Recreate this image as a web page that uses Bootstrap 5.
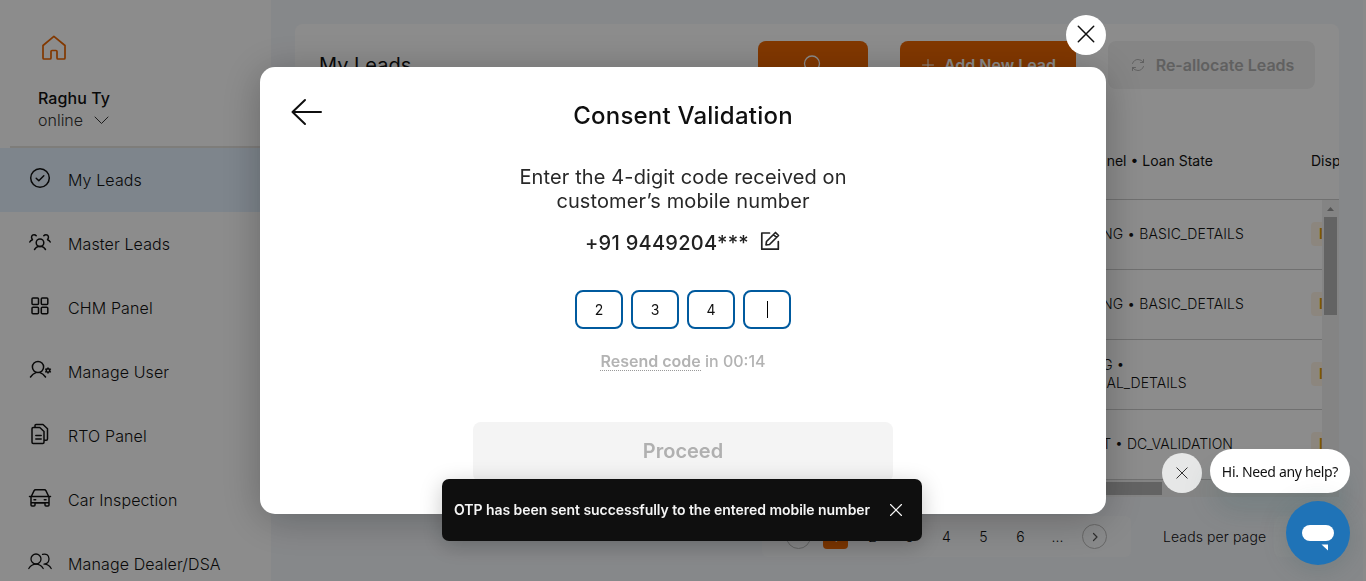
<!DOCTYPE html>
<html lang="en">
<head>
<meta charset="utf-8">
<meta name="viewport" content="width=device-width, initial-scale=1">
<title>My Leads</title>
<link href="https://cdn.jsdelivr.net/npm/bootstrap@5.3.0/dist/css/bootstrap.min.css" rel="stylesheet">
<style>
body{font-family:Inter,"Liberation Sans",sans-serif;background:#f5f8fc;color:#111;height:581px;overflow:hidden;font-size:14px}
svg{display:block;fill:none;stroke:currentColor;stroke-linecap:round;stroke-linejoin:round}
.app-shell{height:581px}
.side{width:271px;background:#fff}
.side-head{height:146px;padding:35px 0 0 38px}
.user-name{font-size:16px;font-weight:500;line-height:22px;margin-top:26px;letter-spacing:.08px}
.user-state{font-size:16px;font-weight:300;line-height:22px;color:#333}
.side-line{height:2px;margin-left:10px;background:#e6e3df}
.side-link{height:64px;padding-left:28px;font-size:16px;font-weight:300;letter-spacing:.12px;color:#111;text-decoration:none}
.side-link svg{margin:0 16px 5px 0}
.side-link.active{background:#e5f2ff}
.main-area{padding:24px 27px 0 24px;min-width:0}
.leads-panel{height:473px;background:#fff;border-radius:8px 8px 0 0;overflow:hidden}
.panel-head{height:99px;padding:17px 24px 0 25px}
.panel-title{font-size:20px;font-weight:400;line-height:48px;margin-left:-1px}
.head-btn{height:48px;border-radius:8px;border:0;font-size:16px;font-weight:600;color:#fff;background:#ed6600}
.head-btn.muted{background:#f3f3f3;color:#b0b0b0}
.head-btn svg{position:static}
.grid-head{height:77px;padding-bottom:1px;border-bottom:1px solid #ccc;font-size:14px;font-weight:400}
.col-gap{width:777px}
.col-state{width:218px}
.col-gap.wide{width:765px}
.col-gap.wide + .col-state{width:230px;letter-spacing:.1px}
.col-gap.mid{width:789px}
.col-gap.mid + .col-state{width:206px}
.col-gap.end{width:779px}
.col-gap.end + .col-state{width:216px}
.grid-scroll{width:17px;background:#f1f1f1}
.grid-thumb{width:13px;height:98px;background:#b5b5b5}
.grid-row{height:70px;padding-bottom:1px;border-bottom:1px solid #ccc;font-size:14px;font-weight:300;line-height:18px}
.state-chip{height:24px;width:40px;margin-left:21px;border-radius:4px;background:#fff5e6;color:#d99a00;font-weight:600;padding-left:8px;line-height:24px}
.h-scroll{height:17px;padding-top:2px;background:#f1f1f1}
.h-scroll div{height:13px;width:867px;background:#b5b5b5}
.pager{width:369px;height:41px;border-radius:6px;background:#fafbfd;padding:0 24px;font-weight:300}
.pg{width:25px;height:25px;border-radius:4px;line-height:25px;text-align:center}
.pg.on{background:#ed6600;color:#fff}
.pg.ring{border:1px solid #bbb;border-radius:50%;color:#555}
.per-page{margin-left:32px;width:111px;font-weight:300;letter-spacing:.1px}
.per-select{width:65px;height:41px;background:#fafbfd;border-radius:6px}
.page-scroll{right:0;top:0;width:3px;height:581px;background:#fbfbfb}
.veil{inset:0;background:rgba(0,0,0,.45);z-index:10}
.consent{width:846px;height:447px;margin:67px 0 0 260px;background:#fff;border-radius:15px;box-shadow:0 5px 40px rgba(0,0,0,.27);color:#0f0f0f}
.consent h1{font-size:24px;font-weight:500;line-height:32px;padding-top:33px;letter-spacing:.22px}
.back-arrow{left:31px;top:31px}
.close-x{right:0;top:-52px;width:40px;height:40px;border-radius:50%;background:#fff}
.ask{font-size:20px;line-height:24px;color:#282828;margin-top:33px;letter-spacing:.12px}
.phone{font-size:20px;font-weight:500;line-height:28px;color:#222;margin-top:16px;letter-spacing:.28px}
.code-box{width:48px;height:39px;border:2px solid #005a9e;border-radius:8px;font-size:14px}
.caret{width:1px;height:17px;background:#000}
.resend{font-size:16px;font-weight:500;line-height:20px;margin-top:22px;color:#b3b3b3}
.resend span{display:inline-block;line-height:18px;font-weight:600;border-bottom:1px dotted #999}
.proceed{width:420px;height:60px;margin-top:51px;padding-bottom:3px;background:#f4f4f4;border-radius:8px;border:0;color:#b0b0b0;font-size:20px;font-weight:600}
.snack{left:442px;top:479px;width:480px;height:62px;padding:0 20px 0 12px;background:#0f0f0f;border-radius:7px;color:#f5f5f5;font-size:14px;font-weight:600;z-index:20;box-shadow:0 5px 22px rgba(0,0,0,.22)}
.snack-text{letter-spacing:-.05px;padding-bottom:1px}
.helper{right:16px;top:449px;z-index:20}
.hint{width:140px;height:44px;border-radius:22px;background:#fff;color:#111;font:14px "Noto Sans",sans-serif;letter-spacing:-.33px;box-shadow:0 20px 30px rgba(23,73,77,.15)}
.hint-x{width:40px;height:40px;border-radius:50%;background:#e6e7e7;color:#333;margin-top:4px}
.launcher{width:64px;height:64px;border-radius:50%;background:#1f73b7;margin-top:8px;padding-top:9px;box-shadow:0 5px 30px rgba(23,73,77,.2)}
</style>
</head>
<body>
<div class="app-shell d-flex">
  <nav class="side flex-shrink-0">
    <div class="side-head">
      <svg width="32" height="26" viewBox="0 0 32 26" style="color:#ed6600" stroke-width="1.7"><path d="M5 10.5 15.9 1.3 27 10.5V23q0 1-1 1h-6q-1 0-1-1v-6.5q0-1-1-1h-4q-1 0-1 1V23q0 1-1 1H6q-1 0-1-1Z"/></svg>
      <div class="user-name">Raghu Ty</div>
      <div class="user-state d-flex align-items-center">online<svg class="ms-2" width="20" height="16" viewBox="0 0 20 16"><path d="m4 5 6.5 6.5L17 5"/></svg></div>
    </div>
    <div class="side-line"></div>
    <a class="side-link active d-flex align-items-center"><svg width="24" height="24" viewBox="0 0 24 24" stroke-width="1.5"><circle cx="12" cy="12" r="9.3"/><path d="m8.2 12.3 2.6 2.4 5-5"/></svg>My Leads</a>
    <a class="side-link d-flex align-items-center"><svg width="24" height="24" viewBox="0 0 24 24" stroke-width="1.5"><circle cx="12" cy="12.8" r="3.8"/><path d="M6.500 19.500q1.800-2.700 3.800-3h3.400q2 .3 3.800 3M1.800 12q.8-1.800 2.700-2.300C2.500 7.300 3.800 4.700 6 4.700q1.400 0 2.200 1M22.200 12q-.8-1.800-2.700-2.300C21.500 7.300 20.200 4.700 18 4.700q-1.400 0-2.200 1"/></svg>Master Leads</a>
    <a class="side-link d-flex align-items-center"><svg width="24" height="24" viewBox="0 0 24 24" stroke-width="1.5"><rect x="4" y="4" width="6.5" height="6.5" rx="1"/><rect x="13.3" y="4" width="6.5" height="6.5" rx="1"/><rect x="4" y="13.2" width="6.5" height="6.5" rx="1"/><rect x="13.3" y="13.2" width="6.5" height="6.5" rx="1"/></svg>CHM Panel</a>
    <a class="side-link d-flex align-items-center"><svg width="24" height="24" viewBox="0 0 24 24" stroke-width="1.5"><circle cx="10" cy="9" r="5.6"/><path d="M2.500 19q2.300-3.500 5.500-4.400M17.500 19q-2.300-3.500-5.500-4.400"/><circle cx="20" cy="12.5" r="1.7"/><path d="M20 9.900v.6M20 14.500v.6M17.700 11.200l.6.3M21.800 13.500l.6.3M17.700 13.800l.6-.3M21.800 11.500l.6-.3"/></svg>Manage User</a>
    <a class="side-link d-flex align-items-center"><svg width="24" height="24" viewBox="0 0 24 24" stroke-width="1.5"><path d="M7 5V3.500q0-1 1-1h7l4.500 4.300V17q0 1.200-1.200 1.200H17M5.200 5.500h6.600L16 9.500v10.800q0 1.200-1.200 1.200H5.200Q4 21.500 4 20.300V6.700q0-1.200 1.200-1.200ZM7.800 13.500h5.400M7.800 17h5.400"/></svg>RTO Panel</a>
    <a class="side-link d-flex align-items-center"><svg width="24" height="24" viewBox="0 0 24 24" stroke-width="1.5"><path d="m3.500 10 2.600-5.300q.4-.9 1.400-.9h9q1 0 1.400.9L20.500 10M1.500 10.500h21M3 11v8q0 1 1 1h2q1 0 1-1v-2h10v2q0 1 1 1h2q1 0 1-1v-8M3 16.800h18M6 13.700h1.700M16.300 13.700H18"/></svg>Car Inspection</a>
    <a class="side-link d-flex align-items-center"><svg width="24" height="24" viewBox="0 0 24 24" stroke-width="1.3"><circle cx="8" cy="9" r="5"/><path d="M.8 18.500Q3.500 14.200 8 14.200t7.200 4.300M14.500 4.300q6-1.300 6.500 4.500 0 5-5 5.400 4.500-.2 7.200 4.300"/></svg>Manage Dealer/DSA</a>
  </nav>

  <main class="main-area flex-grow-1">
    <section class="leads-panel">
      <div class="panel-head d-flex">
        <div class="panel-title me-auto">My Leads</div>
        <button class="head-btn d-flex align-items-center justify-content-center" style="width:110px"><svg width="24" height="24" viewBox="0 0 24 24" stroke-width="1.3"><circle cx="11" cy="10.5" r="7.5"/><path d="m17 16 4 4"/></svg></button>
        <button class="head-btn d-flex align-items-center justify-content-center" style="width:176px;margin-left:32px"><svg width="12" height="12" viewBox="0 0 12 12" style="margin:0 10px 0 2px"><path d="M6 .5v11M.5 6h11"/></svg>Add New Lead</button>
        <button class="head-btn muted d-flex align-items-center justify-content-center" style="width:207px;margin-left:32px"><svg width="14" height="14" viewBox="0 0 14 14" style="margin:0 11px 0 2px"><path d="M1.500 5.500Q3 1.500 7 1.500q3.500 0 5.500 3V1.500M12.500 4.500h-3M12.500 8.500Q11 12.500 7 12.500q-3.500 0-5.500-3v3M1.500 9.500h3"/></svg>Re-allocate Leads</button>
      </div>
      <div class="grid-head d-flex align-items-center">
        <div class="col-gap flex-shrink-0"></div><div class="col-state flex-shrink-0">Channel • Loan State</div>
        <div class="vr" style="height:22px;align-self:center;opacity:.13"></div><div style="padding-left:21px">Disposition</div>
      </div>
      <div class="d-flex" style="height:280px">
        <div class="flex-grow-1 overflow-hidden">
          <div class="grid-row d-flex align-items-center"><div class="col-gap wide flex-shrink-0"></div><div class="col-state flex-shrink-0">PENDING • BASIC_DETAILS</div><div class="state-chip flex-shrink-0">IN</div></div>
          <div class="grid-row d-flex align-items-center"><div class="col-gap wide flex-shrink-0"></div><div class="col-state flex-shrink-0">PENDING • BASIC_DETAILS</div><div class="state-chip flex-shrink-0">IN</div></div>
          <div class="grid-row d-flex align-items-center"><div class="col-gap mid flex-shrink-0"></div><div class="col-state flex-shrink-0">LOG •<br>FINAL_DETAILS</div><div class="state-chip flex-shrink-0">IN</div></div>
          <div class="grid-row d-flex align-items-center"><div class="col-gap end flex-shrink-0"></div><div class="col-state flex-shrink-0">POST • DC_VALIDATION</div><div class="state-chip flex-shrink-0">IN</div></div>
        </div>
        <div class="grid-scroll d-flex flex-column align-items-center">
          <svg width="17" height="17" viewBox="0 0 17 17" style="fill:#999;stroke:none"><path d="m5 11 3.500-4 3.500 4Z"/></svg><div class="grid-thumb"></div>
        </div>
      </div>
      <div class="h-scroll"><div></div></div>
    </section>
    <div class="d-flex align-items-center" style="margin:19px 0 0 467px">
      <div class="pager flex-shrink-0 d-flex align-items-center justify-content-between">
        <span class="pg ring"></span><span class="pg on">1</span><span class="pg">2</span><span class="pg">3</span><span class="pg">4</span><span class="pg">5</span><span class="pg">6</span><span class="pg">...</span>
        <span class="pg ring d-flex align-items-center justify-content-center"><svg width="8" height="10" viewBox="0 0 8 10" stroke-width="1.2"><path d="m2.500 1.500 3.500 3.500-3.500 3.500"/></svg></span>
      </div>
      <div class="per-page flex-shrink-0">Leads per page</div>
      <div class="per-select flex-shrink-0"></div>
    </div>
  </main>
</div>
<div class="page-scroll position-absolute"></div>

<div class="veil position-fixed">
  <section class="consent position-relative d-flex flex-column align-items-center text-center">
    <svg class="back-arrow position-absolute" width="32" height="28" viewBox="0 0 32 28" stroke-width="2"><path d="M1.500 14H30M14 2 1.500 14 14 26"/></svg>
    <div class="close-x position-absolute d-flex align-items-center justify-content-center"><svg width="18" height="18" viewBox="0 0 18 18" stroke-width="1.5" style="margin-top:-2px"><path d="m1.300 1.300 15.400 15.400M16.700 1.300 1.300 16.700"/></svg></div>
    <h1 class="mb-0">Consent Validation</h1>
    <div class="ask">Enter the 4-digit code received on<br>customer’s mobile number</div>
    <div class="phone d-flex align-items-center">+91 9449204***<svg style="margin:-4px 1px 0 11px" width="20" height="20" viewBox="0 0 20 20" stroke-width="1.7"><path d="M9.500 2H1.800v16.200h16.500V10.500"/><path d="m6.500 10.500 9-9 3 3-9 9-3.500.5ZM13.500 3.500l3 3"/></svg></div>
    <div class="d-flex gap-2" style="margin-top:33px">
      <div class="code-box d-flex align-items-center justify-content-center">2</div>
      <div class="code-box d-flex align-items-center justify-content-center">3</div>
      <div class="code-box d-flex align-items-center justify-content-center">4</div>
      <div class="code-box d-flex align-items-center justify-content-center"><div class="caret"></div></div>
    </div>
    <div class="resend"><span>Resend code</span> in 00:14</div>
    <button class="proceed">Proceed</button>
  </section>
</div>

<div class="snack position-fixed d-flex align-items-center justify-content-between"><span class="snack-text text-nowrap">OTP has been sent successfully to the entered mobile number</span><svg width="12" height="12" viewBox="0 0 12 12" stroke-width="1.2"><path d="m.5.5 11 11M11.500.5l-11 11"/></svg></div>

<div class="helper position-fixed d-flex flex-column align-items-end">
  <div class="d-flex gap-2">
    <div class="hint-x d-flex align-items-center justify-content-center"><svg width="12" height="12" viewBox="0 0 12 12"><path d="m.8.8 10.400 10.400M11.200.8.8 11.200"/></svg></div>
    <div class="hint d-flex align-items-center justify-content-center">Hi. Need any help?</div>
  </div>
  <div class="launcher d-flex align-items-center justify-content-center"><svg width="34" height="28" viewBox="0 0 34 28" style="fill:#fff;stroke:none"><rect x="1" y="1" width="32" height="16" rx="8"/><path d="M20.500 20.500H27v6Z"/></svg></div>
</div>
<script src="https://cdn.jsdelivr.net/npm/bootstrap@5.3.0/dist/js/bootstrap.bundle.min.js"></script>
</body>
</html>
